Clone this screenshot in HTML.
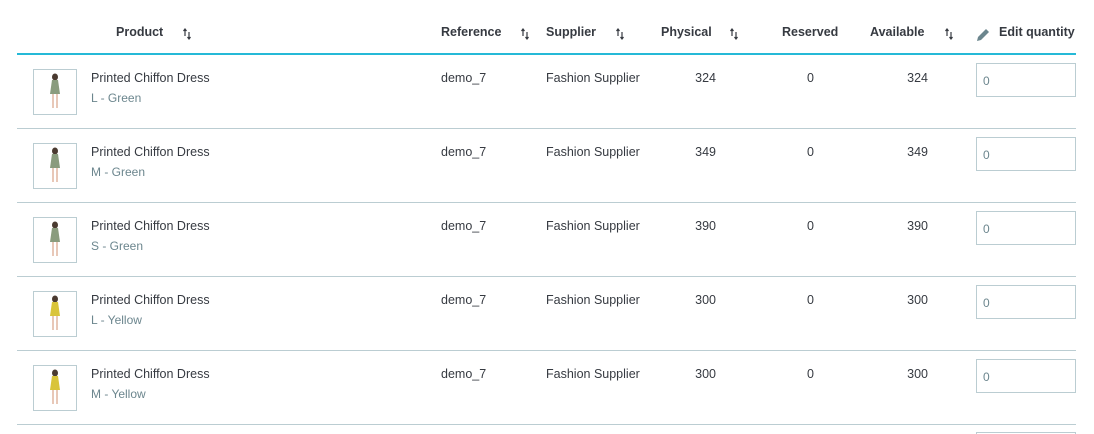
<!DOCTYPE html><html><head><style>
html,body{margin:0;width:1094px;height:434px;overflow:hidden}
body{background:#fff;font-family:"Liberation Sans",sans-serif;font-size:12.5px;color:#363a41;position:relative}
.a{position:absolute;white-space:nowrap}
.h{font-weight:bold;font-size:12.5px;top:25px;color:#363a41}
.s{position:absolute;top:28px;width:8px;height:12px}
.line{position:absolute;left:17px;width:1059px;height:1px;background:#bbcdd2}
.th{position:absolute;left:33px;width:44px;height:46px;border:1px solid #bbcdd2;box-sizing:border-box;background:#fff}
.in{position:absolute;left:976px;width:100px;height:34px;border:1px solid #bbcdd2;box-sizing:border-box;color:#6c868e;padding:10px 0 0 6px;font-size:12px}
.g{color:#6c868e;font-size:12px}
</style></head><body>
<div class="a h" style="left:116px">Product</div>
<div class="a h" style="left:441px">Reference</div>
<div class="a h" style="left:546px">Supplier</div>
<div class="a h" style="left:661px">Physical</div>
<div class="a h" style="left:782px">Reserved</div>
<div class="a h" style="left:870px">Available</div>
<div class="a h" style="left:999px">Edit quantity</div>
<svg class="s" style="left:183px" viewBox="0 0 8 12"><path d="M2 1v7M0.5 3L2 1 3.5 3M6 4v7M4.5 9L6 11 7.5 9" stroke="#363a41" stroke-width="1.2" fill="none"/></svg>
<svg class="s" style="left:521px" viewBox="0 0 8 12"><path d="M2 1v7M0.5 3L2 1 3.5 3M6 4v7M4.5 9L6 11 7.5 9" stroke="#363a41" stroke-width="1.2" fill="none"/></svg>
<svg class="s" style="left:616px" viewBox="0 0 8 12"><path d="M2 1v7M0.5 3L2 1 3.5 3M6 4v7M4.5 9L6 11 7.5 9" stroke="#363a41" stroke-width="1.2" fill="none"/></svg>
<svg class="s" style="left:730px" viewBox="0 0 8 12"><path d="M2 1v7M0.5 3L2 1 3.5 3M6 4v7M4.5 9L6 11 7.5 9" stroke="#363a41" stroke-width="1.2" fill="none"/></svg>
<svg class="s" style="left:945px" viewBox="0 0 8 12"><path d="M2 1v7M0.5 3L2 1 3.5 3M6 4v7M4.5 9L6 11 7.5 9" stroke="#363a41" stroke-width="1.2" fill="none"/></svg>
<svg class="a" style="left:976px;top:28px" width="14" height="14" viewBox="0 0 14 14"><path d="M1 13l1-4 8-8 3 3-8 8z" fill="#6c868e"/></svg>
<div class="line" style="top:53px;height:2px;background:#25b9d7"></div>
<div id="rows"></div>
<script>
var d=[["L - Green",324,"#8a9c7e"],["M - Green",349,"#8a9c7e"],["S - Green",390,"#8a9c7e"],["L - Yellow",300,"#d9c43a"],["M - Yellow",300,"#d9c43a"]];
var h="";d.forEach(function(r,i){var y=54+74*i;
h+='<div class="th" style="top:'+(y+15)+'px"><svg width="42" height="44" viewBox="0 0 42 44"><ellipse cx="21" cy="7" rx="3" ry="3.5" fill="#4a3a30"/><path d="M18 10h6l2 14h-10z" fill="'+r[2]+'"/><path d="M19 24l0 14M23 24l0 14" stroke="#e8c8b8" stroke-width="2"/></svg></div>';
h+='<div class="a" style="left:91px;top:'+(y+17)+'px">Printed Chiffon Dress</div>';
h+='<div class="a g" style="left:91px;top:'+(y+37)+'px">'+r[0]+'</div>';
h+='<div class="a" style="left:441px;top:'+(y+17)+'px">demo_7</div>';
h+='<div class="a" style="left:546px;top:'+(y+17)+'px">Fashion Supplier</div>';
h+='<div class="a" style="left:676px;width:40px;text-align:right;top:'+(y+17)+'px">'+r[1]+'</div>';
h+='<div class="a" style="left:807px;top:'+(y+17)+'px">0</div>';
h+='<div class="a" style="left:888px;width:40px;text-align:right;top:'+(y+17)+'px">'+r[1]+'</div>';
h+='<div class="in" style="top:'+(y+9)+'px">0</div>';
h+='<div class="line" style="top:'+(y+74)+'px"></div>';});
h+='<div class="in" style="top:432px;height:2px;border-bottom:none;padding:0"></div>';
document.getElementById("rows").innerHTML=h;
</script>
</body></html>
